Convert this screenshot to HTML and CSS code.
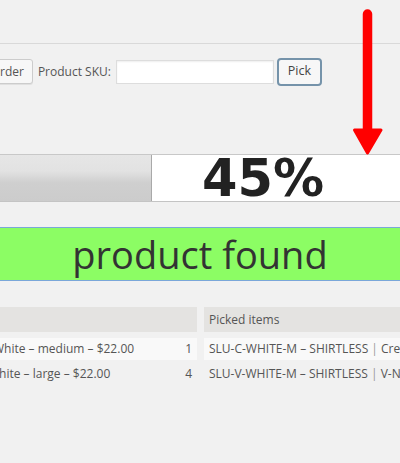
FILE: index.html
```html
<!DOCTYPE html>
<html lang="en">
<head>
<meta charset="utf-8">
<title>Pick order</title>
<link rel="stylesheet" href="styles.css">
</head>
<body>
<div class="page">
  <div class="header"></div>
  <div class="toolbar">
    <button class="btn btn-order" type="button">rder</button>
    <label class="sku-label" for="sku">Product SKU:</label>
    <input class="sku-input" id="sku" type="text">
    <button class="btn btn-pick" type="button">Pick</button>
  </div>
  <div class="progress">
    <div class="progress-fill"></div>
    <div class="progress-rest"><span class="progress-label">45%</span></div>
  </div>
  <div class="status">product found</div>
  <div class="table">
    <div class="row row-head">
      <div class="cell cell-product"></div>
      <div class="cell cell-picked">Picked items</div>
    </div>
    <div class="row row-odd">
      <div class="cell cell-product"><span class="name">White – medium – $22.00</span><span class="qty">1</span></div>
      <div class="cell cell-picked">SLU-C-WHITE-M – SHIRTLESS <span class="sep">|</span> Crew Neck – White – medium</div>
    </div>
    <div class="row row-even">
      <div class="cell cell-product cell-shift"><span class="name">White – large – $22.00</span><span class="qty">4</span></div>
      <div class="cell cell-picked">SLU-V-WHITE-M – SHIRTLESS <span class="sep">|</span> V-Neck – White – large</div>
    </div>
  </div>
  <svg class="arrow" width="60" height="170" viewBox="0 0 60 170" aria-hidden="true">
    <line x1="27.5" y1="14" x2="27.5" y2="134" stroke="#ff0000" stroke-width="9.5" stroke-linecap="round"/>
    <polygon points="14.5,130 41,130 27.5,153" fill="#ff0000" stroke="#ff0000" stroke-width="3" stroke-linejoin="round"/>
  </svg>
</div>
</body>
</html>
```

FILE: styles.css
```css
html, body {
  margin: 0;
  padding: 0;
  overflow: hidden;
  background: #f1f1f1;
}
body {
  font-family: "Open Sans", "Liberation Sans", sans-serif;
  font-size: 12px;
  color: #444;
}
.page {
  position: relative;
  width: 400px;
  height: 463px;
  overflow: hidden;
}
.header {
  height: 43px;
  border-bottom: 1px solid #d9d9d9;
}
.toolbar {
  display: flex;
  align-items: center;
  margin-top: 14px;
  height: 27px;
}
.btn {
  font-family: "Open Sans", "Liberation Sans", sans-serif;
  font-size: 12px;
  color: #555;
  background: #f7f7f7;
  border: 1px solid #cccccc;
  border-radius: 3px;
  box-sizing: border-box;
  padding: 0 8px;
  margin: 0;
  line-height: 1;
}
.btn-order {
  height: 25px;
  margin-left: -9px;
  box-shadow: 0 1px 0 #e0e0e0;
}
.sku-label {
  margin-left: 5px;
  color: #555;
}
.sku-input {
  margin: 0 0 0 5px;
  width: 158px;
  height: 24px;
  box-sizing: border-box;
  border: 1px solid #dddddd;
  background: #fff;
  box-shadow: inset 0 1px 2px rgba(0,0,0,.07);
  padding: 0 4px;
}
.btn-pick {
  margin-left: 3px;
  width: 45px;
  height: 28px;
  padding: 0;
  border-color: #7593aa;
  border-width: 2px;
  border-radius: 4px;
  color: #444;
  font-size: 12.5px;
}
.progress {
  display: flex;
  margin-top: 69px;
  margin-left: -20px;
  width: 460px;
  height: 48px;
  box-sizing: border-box;
  border-top: 1px solid #c8c8c8;
  border-bottom: 1px solid #c4c4c4;
}
.progress-fill {
  width: 172px;
  flex: none;
  box-sizing: border-box;
  border-right: 1px solid #a9a9a9;
  background: linear-gradient(to bottom, #e6e6e6 0%, #e2e2e2 35%, #cfcfcf 60%, #cccccc 100%);
}
.progress-rest {
  flex: 1;
  background: #fff;
  padding-left: 50px;
  display: flex;
  align-items: center;
}
.progress-label {
  font-family: "DejaVu Sans", "Liberation Sans", sans-serif;
  font-weight: bold;
  font-size: 51px;
  line-height: 1;
  color: #222;
  margin-top: 1px;
}
.status {
  margin-top: 25px;
  margin-left: -10px;
  width: 420px;
  height: 54px;
  box-sizing: border-box;
  border-top: 1px solid #7aa7d9;
  border-bottom: 1px solid #7aa7d9;
  background: #8cfd64;
  color: #333;
  font-size: 38px;
  line-height: 52px;
  text-align: center;
}
.table {
  margin-top: 26px;
  margin-left: -100px;
  display: flex;
  flex-direction: column;
}
.row {
  display: grid;
  grid-template-columns: 297px 300px;
  column-gap: 7px;
}
.cell {
  white-space: nowrap;
  overflow: hidden;
  color: #555;
}
.row-head {
  height: 25px;
  line-height: 25px;
}
.row-head .cell {
  background: #e4e3e1;
  color: #555;
}
.row-odd {
  margin-top: 6px;
  height: 22px;
  line-height: 22px;
}
.row-odd .cell {
  background: #f9f9f9;
}
.row-even {
  margin-top: 2px;
  height: 24px;
  line-height: 24px;
}
.cell-product {
  display: flex;
  justify-content: space-between;
  padding: 0 5px 0 93px;
}
.cell-shift {
  padding-left: 88px;
}
.cell-picked {
  padding-left: 5px;
}
.sep {
  color: #999;
}
.arrow {
  position: absolute;
  left: 340px;
  top: 0;
}
```
